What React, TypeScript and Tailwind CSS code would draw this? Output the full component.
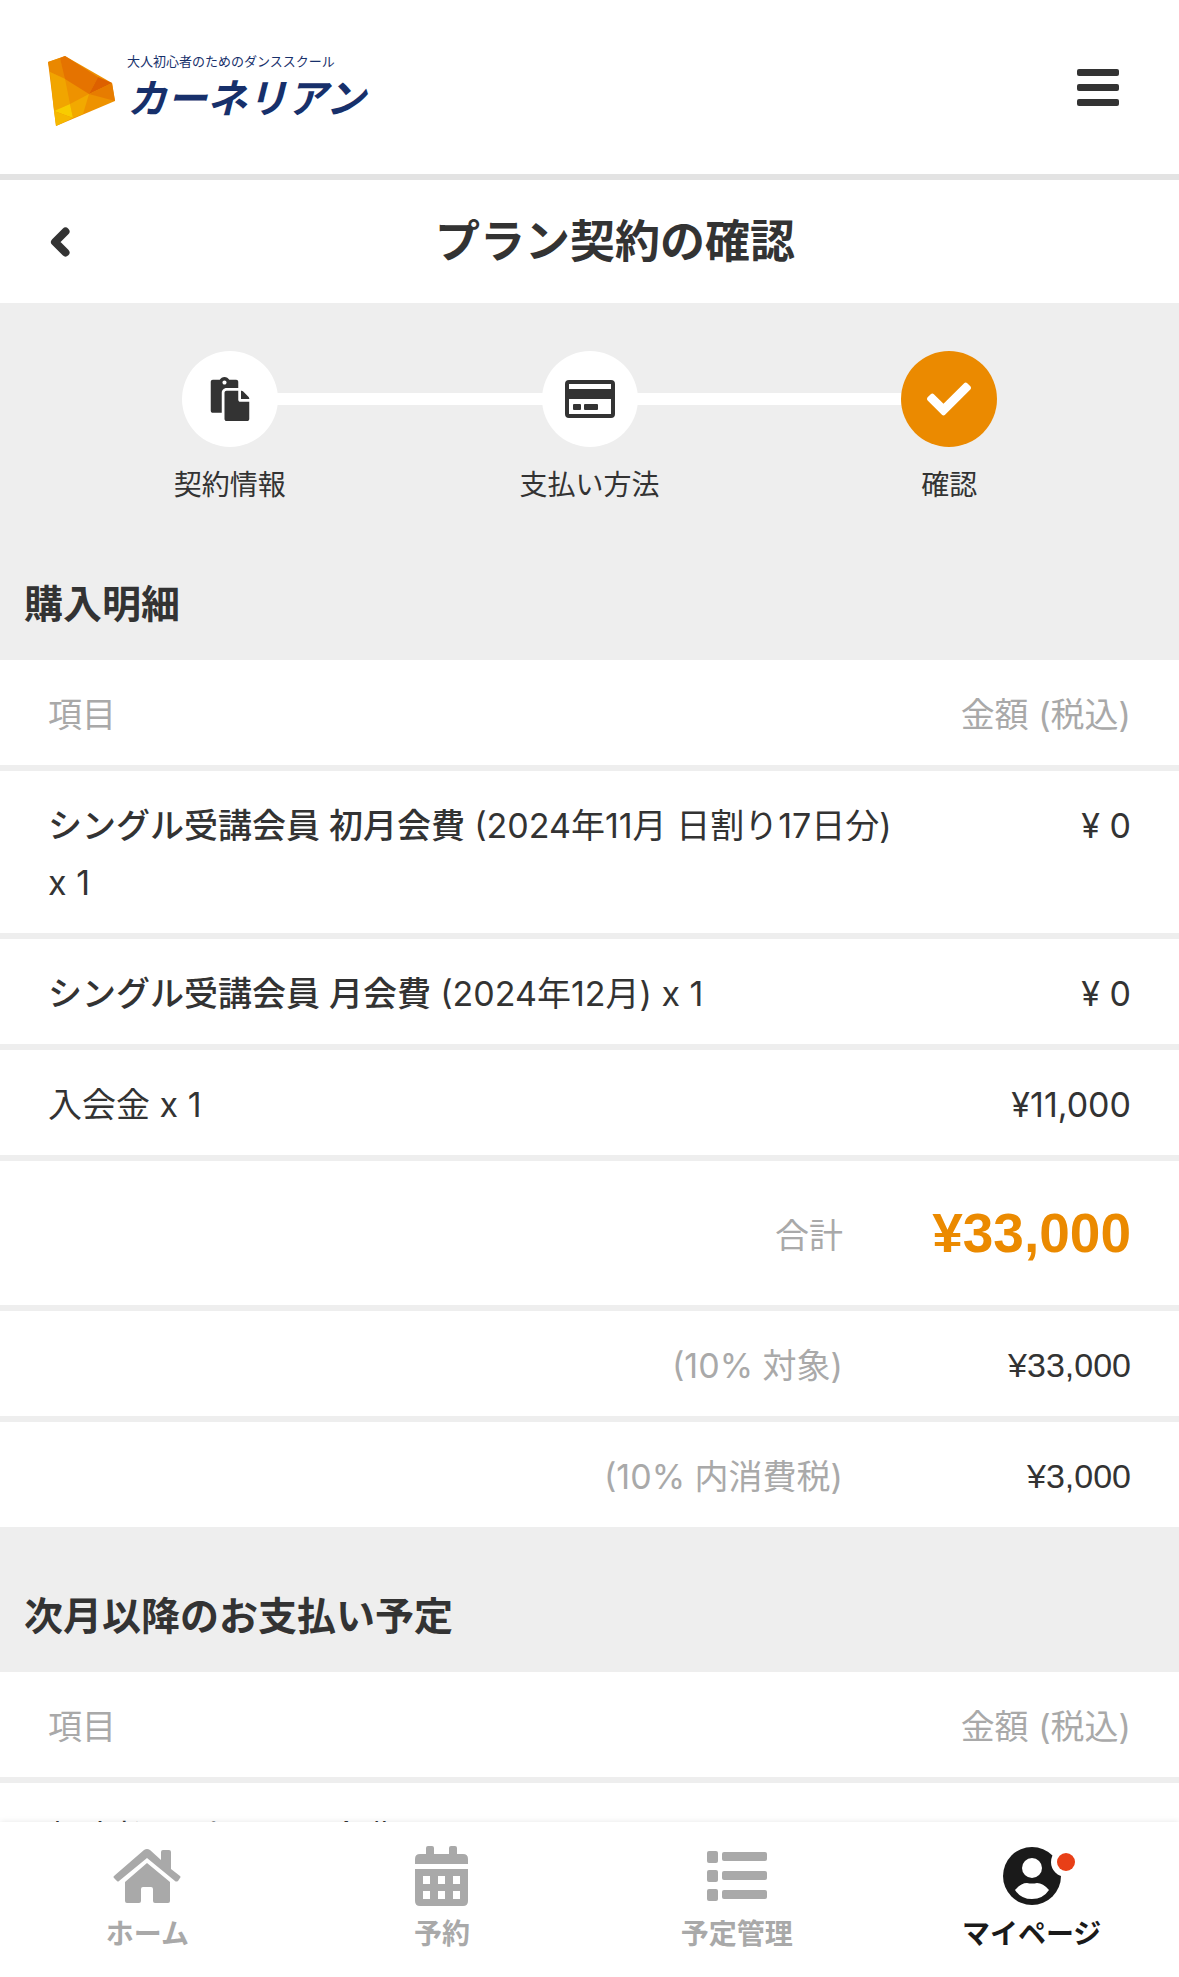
import type { ReactNode } from "react";
import { FaCheck, FaPaste } from "react-icons/fa";

type LineItem = {
    plan?: string;
    detail: string;
    quantity?: number;
    amount: string;
};

const purchaseItems: LineItem[] = [
    { plan: "シングル受講会員 初月会費", detail: "(2024年11月 日割り17日分)", quantity: 1, amount: "¥ 0" },
    { plan: "シングル受講会員 月会費", detail: "(2024年12月)", quantity: 1, amount: "¥ 0" },
    { detail: "入会金", quantity: 1, amount: "¥11,000" },
];

const upcomingItems: LineItem[] = [{ detail: "都度払いプラン 月会費", amount: "" }];

const Logo = () => (
    <a href="#" className="flex items-center gap-3 pt-2 text-[#17306b]">
        <svg viewBox="0 0 67 70" className="w-[67px] h-[70px]" aria-hidden="true">
            <polygon points="0,6 17,0 64,27 67,45 8,70" fill="#ee9200" />
            <polygon points="0,6 12,2 18,23 2,16" fill="#ea8800" />
            <polygon points="12,2 17,0 50,21 41,38 17,23" fill="#e57300" />
            <polygon points="50,21 64,27 41,38" fill="#dd6000" />
            <polygon points="64,27 67,45 41,38" fill="#e77c00" />
            <polygon points="2,16 17,23 22,48 6,55" fill="#f1a500" />
            <polygon points="22,48 41,38 35,58 25,62" fill="#f2a900" />
            <polygon points="6,55 22,48 25,62" fill="#f8cc00" />
            <polygon points="6,55 25,62 8,70" fill="#f5b800" />
        </svg>
        <span className="flex flex-col">
            <span className="text-[13px] leading-4">大人初心者のためのダンススクール</span>
            <span className="text-[40px] leading-[60px] font-bold italic">カーネリアン</span>
        </span>
    </a>
);

const BackIcon = () => (
    <svg viewBox="0 0 24 32" className="w-6 h-8" aria-hidden="true">
        <path
            d="M17.5 5.5L7 16L17.5 26.5"
            fill="none"
            stroke="currentColor"
            strokeWidth="8"
            strokeLinecap="round"
            strokeLinejoin="round"
        />
    </svg>
);

const CardIcon = () => (
    <svg viewBox="0 0 50 38" className="w-[50px] h-[38px]" aria-hidden="true">
        <rect x="2" y="2" width="46" height="34" rx="2" fill="none" stroke="#333" strokeWidth="4" />
        <rect x="2" y="9" width="46" height="10" fill="#333" />
        <rect x="8" y="24" width="8" height="6" rx="1" fill="#333" />
        <rect x="19" y="24" width="14" height="6" rx="1" fill="#333" />
    </svg>
);

const HomeIcon = () => (
    <svg viewBox="0 0 68 54" className="w-[68px] h-[54px]" fill="currentColor" aria-hidden="true">
        <path d="M31 1Q34 -1 37 1L48 11V3Q48 1 50 1H56Q58 1 58 3V20L67 27Q68 28 67 29L65 32Q63 33 62 32L34 9L6 32Q5 33 4 32L1 29Q0 28 1 27Z" />
        <path d="M34 14L57 33V52Q57 54 55 54H42Q40 54 40 52V40Q40 38 38 38H30Q28 38 28 40V52Q28 54 26 54H14Q12 54 12 52V33Z" />
    </svg>
);

const CalendarIcon = () => (
    <svg viewBox="0 0 54 60" className="w-[54px] h-[60px]" fill="currentColor" aria-hidden="true">
        <path d="M5 8H11V2Q11 0 13 0H17Q19 0 19 2V8H34V2Q34 0 36 0H40Q42 0 42 2V8H48Q53 8 53 13V18H0V13Q0 8 5 8Z" />
        <path
            fillRule="evenodd"
            d="M0 23H53V55Q53 60 48 60H5Q0 60 0 55ZM8 30V38H15V30ZM23 30V38H30V30ZM38 30V38H45V30ZM8 45V53H15V45ZM23 45V53H30V45ZM38 45V53H45V45Z"
        />
    </svg>
);

const ListIcon = () => (
    <svg viewBox="0 0 60 50" className="w-[60px] h-[50px]" fill="currentColor" aria-hidden="true">
        {[0, 19, 38].map((y) => (
            <g key={y}>
                <rect x="0" y={y} width="11" height="12" rx="2" />
                <rect x="15" y={y + 1} width="45" height="9" rx="2" />
            </g>
        ))}
    </svg>
);

// The notification dot hangs over the right edge, so the avatar stays centred.
const UserIcon = () => (
    <svg viewBox="0 0 58 58" className="size-[58px] overflow-visible" aria-hidden="true">
        <circle cx="29" cy="29" r="29" fill="#1a1a1a" />
        <circle cx="29" cy="21" r="10" fill="#fff" />
        <path d="M12 43Q18 36 24 36Q29 37 34 36Q40 36 46 43Q40 52 29 52Q18 52 12 43Z" fill="#fff" />
        <circle cx="63" cy="15" r="15" fill="#fff" />
        <circle cx="63" cy="15" r="9" fill="#e83f17" />
    </svg>
);

const Step = ({ label, active, children }: { label: string; active?: boolean; children: ReactNode }) => (
    <li className="flex flex-col items-center flex-1 gap-4">
        <span
            className={
                active
                    ? "flex items-center justify-center size-24 rounded-full bg-[#eb8a00] text-white"
                    : "flex items-center justify-center size-24 rounded-full bg-white"
            }
        >
            {children}
        </span>
        <span className="text-[28px] leading-11">{label}</span>
    </li>
);

const TableHead = () => (
    <thead>
        <tr className="text-[#a9a9a9]">
            <th scope="col" colSpan={2} className="pt-6.5 pb-5.5 pl-12 text-left font-normal">
                項目
            </th>
            <th scope="col" className="pt-6.5 pb-5.5 pr-12 text-right font-normal whitespace-nowrap">
                金額 (税込)
            </th>
        </tr>
    </thead>
);

const ItemRow = ({ item }: { item: LineItem }) => (
    <tr className="border-t-6 border-[#eee] align-top">
        <td colSpan={2} className="pt-6.5 pb-5.5 pl-12">
            {item.plan && <span className="font-medium">{item.plan} </span>}
            {item.detail}
            {item.quantity && <> x&nbsp;{item.quantity}</>}
        </td>
        <td className="pt-6.5 pb-5.5 pr-12 text-right">{item.amount}</td>
    </tr>
);

const TaxRow = ({ label, amount }: { label: string; amount: string }) => (
    <tr className="border-t-6 border-[#eee]">
        <th scope="row" className="pt-6.5 pb-5.5 pr-12 text-right font-normal text-[#a9a9a9]">
            {label}
        </th>
        <td colSpan={2} className="pt-6.5 pb-5.5 pr-12 text-right font-[Liberation_Sans]">
            {amount}
        </td>
    </tr>
);

const PriceTable = ({ children }: { children: ReactNode }) => (
    <table className="w-full table-fixed bg-white text-[34px] leading-[57px]">
        <colgroup>
            <col />
            <col className="w-8" />
            <col className="w-64" />
        </colgroup>
        <TableHead />
        <tbody>{children}</tbody>
    </table>
);

const SectionTitle = ({ children }: { children: ReactNode }) => (
    <h2 className="px-6 pt-14.5 pb-6.5 text-[39px] leading-[61px] font-bold">{children}</h2>
);

const NavItem = ({ label, active, children }: { label: string; active?: boolean; children: ReactNode }) => (
    <a
        href="#"
        aria-current={active ? "page" : undefined}
        className={
            active
                ? "flex flex-col items-center flex-1 pt-5 text-[#1a1a1a]"
                : "flex flex-col items-center flex-1 pt-5 text-[#a9a9a9]"
        }
    >
        <span className="flex items-center h-[68px]">{children}</span>
        <span className="text-[28px] leading-12 font-bold">{label}</span>
    </a>
);

export default function App() {
    return (
        <div className="flex flex-col h-screen bg-[#eee] text-[#333] font-['Inter','Noto_Sans_CJK_JP',sans-serif]">
            <header className="flex items-center justify-between shrink-0 h-45 px-12 bg-white border-b-6 border-[#e3e3e3]">
                <Logo />
                <button type="button" aria-label="メニュー" className="flex flex-col gap-2 px-3">
                    <span className="w-[42px] h-[7px] rounded-xs bg-[#333]" />
                    <span className="w-[42px] h-[7px] rounded-xs bg-[#333]" />
                    <span className="w-[42px] h-[7px] rounded-xs bg-[#333]" />
                </button>
            </header>

            <main className="flex-1 min-h-0 overflow-hidden">
                <div className="flex items-center px-12 py-7 bg-white">
                    <button type="button" aria-label="戻る" className="w-[51px]">
                        <BackIcon />
                    </button>
                    <h1 className="flex-1 text-center text-[45px] leading-[67px] font-bold">プラン契約の確認</h1>
                </div>

                <div className="relative px-[50px] pt-12 pb-2">
                    <div className="absolute top-[90px] left-1/5 right-1/5 h-3 bg-white" />
                    <ol className="relative flex">
                        <Step label="契約情報">
                            <FaPaste className="size-11" />
                        </Step>
                        <Step label="支払い方法">
                            <CardIcon />
                        </Step>
                        <Step label="確認" active>
                            <FaCheck className="size-11" />
                        </Step>
                    </ol>
                </div>

                <SectionTitle>購入明細</SectionTitle>
                <PriceTable>
                    {purchaseItems.map((item) => (
                        <ItemRow key={item.detail} item={item} />
                    ))}
                    <tr className="border-t-6 border-[#eee]">
                        <th scope="row" className="pt-6.5 pb-5.5 pr-12 text-right font-normal text-[#a9a9a9]">
                            合計
                        </th>
                        <td
                            colSpan={2}
                            className="py-6 pr-12 text-right text-[55px] leading-24 font-bold text-[#eb8a00] font-[Liberation_Sans]"
                        >
                            ¥33,000
                        </td>
                    </tr>
                    <TaxRow label="(10% 対象)" amount="¥33,000" />
                    <TaxRow label="(10% 内消費税)" amount="¥3,000" />
                </PriceTable>

                <SectionTitle>次月以降のお支払い予定</SectionTitle>
                <PriceTable>
                    {upcomingItems.map((item) => (
                        <ItemRow key={item.detail} item={item} />
                    ))}
                </PriceTable>
            </main>

            <nav className="relative flex shrink-0 h-[155px] bg-white shadow-[0_0_6px_rgba(0,0,0,0.1)]">
                <NavItem label="ホーム">
                    <HomeIcon />
                </NavItem>
                <NavItem label="予約">
                    <CalendarIcon />
                </NavItem>
                <NavItem label="予定管理">
                    <ListIcon />
                </NavItem>
                <NavItem label="マイページ" active>
                    <UserIcon />
                </NavItem>
            </nav>
        </div>
    );
}
